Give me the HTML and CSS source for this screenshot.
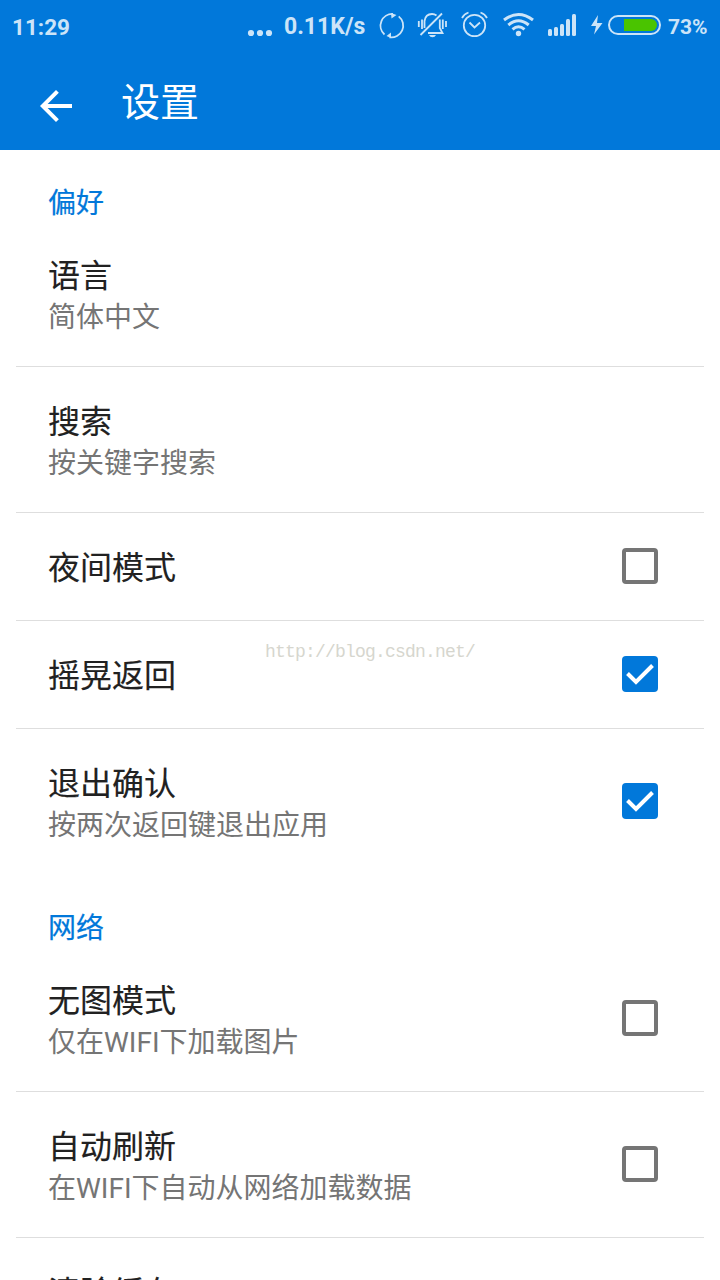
FILE: index.html
```html
<!DOCTYPE html>
<html lang="zh-CN">
<head>
    <meta charset="UTF-8">
    <meta name="viewport" content="width=device-width, initial-scale=1.0">
    <title>设置</title>
    <link rel="stylesheet" href="styles.css">
</head>
<body>
    <header class="header">
        <div class="status-bar">
            <span class="clock">11:29</span>
            <svg class="dots" width="26" height="50" viewBox="0 0 26 50">
                <circle cx="4" cy="33" r="3.1"/>
                <circle cx="13" cy="33" r="3.1"/>
                <circle cx="22" cy="33" r="3.1"/>
            </svg>
            <span class="speed">0.11K/s</span>
            <!-- sync, muted, alarm, wifi, signal, charging -->
            <svg class="icons" width="232" height="50" viewBox="376 0 232 50">
                <g class="line">
                    <path d="M384.5 34.5A11.8 11.8 0 0 1 393 13.9"/>
                    <path d="M398.7 16.4A11.8 11.8 0 0 1 389.5 37.3"/>
                    <path d="M424.500 28V21Q425.500 14 432 14Q434.500 14 436.500 15.500M439.800 19.500V28L442.500 33H428"/>
                    <path d="M420.500 35L442 13.500"/>
                    <path d="M418.800 21V27M422 19.500V29M442.800 19.500V29M446 21V27"/>
                    <circle cx="474.500" cy="25.500" r="10.700"/>
                    <path d="M469.500 22.500L474.500 27.500L480 22.500"/>
                    <path d="M462 18Q464 14 468.500 12.500M480.500 12.500Q485 14 487 18"/>
                </g>
                <g class="fill">
                    <path d="M391 13L396.500 15L391.500 18.500z"/>
                    <path d="M391 38L386.500 36L391 32.500z"/>
                    <path d="M429 35H436Q435 37.200 432.500 37.200Q430 37.200 429 35z"/>
                    <circle cx="518.500" cy="33.500" r="2.700"/>
                    <rect x="548" y="29" width="4" height="7" rx="1.500"/>
                    <rect x="554" y="27" width="4" height="9" rx="1.500"/>
                    <rect x="560" y="24" width="4" height="12" rx="1.500"/>
                    <rect x="566" y="19" width="4" height="17" rx="1.500"/>
                    <rect x="572" y="14" width="4" height="22" rx="1.500"/>
                    <path d="M598 15L591 26H596L594 34.500L602.500 23H597z"/>
                </g>
                <g class="wifi">
                    <path d="M504 20Q518.500 9 533 20"/>
                    <path d="M508.300 25Q518.500 16.500 528.700 25"/>
                    <path d="M512.500 29.300Q518.500 24.300 524.500 29.300"/>
                </g>
            </svg>
            <div class="battery"><div class="battery-level"></div></div>
            <span class="percent">73%</span>
        </div>
        <div class="toolbar">
            <svg class="back" width="48" height="48" viewBox="0 0 24 24">
                <path d="M20 11H7.830l5.590-5.590L12 4l-8 8 8 8 1.410-1.410L7.830 13H20v-2z"/>
            </svg>
            <h1>设置</h1>
        </div>
    </header>

    <main class="settings">
        <section class="group">
            <h2>偏好</h2>
            <div class="row">
                <div class="text">
                    <div class="title">语言</div>
                    <div class="summary">简体中文</div>
                </div>
            </div>
            <div class="row">
                <div class="text">
                    <div class="title">搜索</div>
                    <div class="summary">按关键字搜索</div>
                </div>
            </div>
            <div class="row single">
                <div class="text">
                    <div class="title">夜间模式</div>
                </div>
                <span class="checkbox"></span>
            </div>
            <div class="row single">
                <div class="text">
                    <div class="title">摇晃返回</div>
                </div>
                <span class="checkbox checked"><svg width="36" height="36" viewBox="0 0 36 36"><path d="M5.500 17.500L14 26L30.500 9.500"/></svg></span>
            </div>
            <div class="row">
                <div class="text">
                    <div class="title">退出确认</div>
                    <div class="summary">按两次返回键退出应用</div>
                </div>
                <span class="checkbox checked"><svg width="36" height="36" viewBox="0 0 36 36"><path d="M5.500 17.500L14 26L30.500 9.500"/></svg></span>
            </div>
        </section>

        <section class="group">
            <h2>网络</h2>
            <div class="row">
                <div class="text">
                    <div class="title">无图模式</div>
                    <div class="summary">仅在WIFI下加载图片</div>
                </div>
                <span class="checkbox"></span>
            </div>
            <div class="row">
                <div class="text">
                    <div class="title">自动刷新</div>
                    <div class="summary">在WIFI下自动从网络加载数据</div>
                </div>
                <span class="checkbox"></span>
            </div>
            <div class="row">
                <div class="text">
                    <div class="title">清除缓存</div>
                </div>
            </div>
        </section>
    </main>

    <div class="watermark">http://blog.csdn.net/</div>
</body>
</html>
```
FILE: styles.css
```css
* {
    box-sizing: border-box;
}
body {
    position: relative;
    margin: 0;
    height: 1280px;
    overflow: hidden;
    background: #fff;
    font-family: Roboto, "Noto Sans CJK SC", sans-serif;
}
.header {
    height: 150px;
    background: #0178da;
    color: #fff;
}
.status-bar {
    display: flex;
    align-items: center;
    height: 50px;
    padding: 0 12px;
    color: #cce4f8;
    font-size: 23px;
    font-weight: 700;
    line-height: 50px;
    white-space: nowrap;
}
.status-bar span {
    padding-top: 3px;
}
.status-bar svg {
    flex: none;
}
.status-bar .clock {
    flex: none;
    width: 235px;
    font-size: 22.5px;
}
.dots {
    fill: #cce4f8;
}
.status-bar .speed {
    flex: none;
    width: 92px;
    margin-left: 11px;
}
.line, .wifi {
    fill: none;
    stroke: #cce4f8;
    stroke-width: 1.8;
}
.wifi {
    stroke-width: 3;
}
.fill {
    fill: #cce4f8;
}
.battery {
    flex: none;
    width: 53px;
    height: 20px;
    padding: 2px;
    border: 2px solid #cce4f8;
    border-radius: 10px;
}
.battery-level {
    width: 33px;
    height: 12px;
    margin-left: auto;
    background: #4ac400;
    border-radius: 0 6px 6px 0;
}
.status-bar .percent {
    margin-left: 7px;
    font-size: 21px;
}
.toolbar {
    display: flex;
    align-items: center;
    height: 100px;
    padding: 12px 32px 0;
}
.back {
    fill: #fff;
}
.toolbar h1 {
    margin: -7px 0 0 41px;
    font-size: 39px;
    font-weight: 400;
    line-height: 60px;
}
.group h2 {
    height: 71px;
    margin: 0;
    padding: 34px 48px 0;
    color: #0178da;
    font-size: 28px;
    font-weight: 400;
    line-height: 40px;
    -webkit-text-stroke: 0.2px;
}
.row {
    display: flex;
    align-items: center;
    justify-content: space-between;
    height: 146px;
    margin: 0 16px;
    padding: 0 46px 0 32px;
    border-bottom: 1px solid #dedede;
}
.row:last-child {
    border-bottom-color: transparent;
}
.row.single {
    height: 108px;
}
.text {
    align-self: flex-start;
    padding-top: 35px;
}
.title {
    color: #212121;
    font-size: 32px;
    line-height: 40px;
    -webkit-text-stroke: 0.15px;
}
.summary {
    color: #757575;
    font-size: 28px;
    line-height: 44px;
}
.checkbox {
    width: 36px;
    height: 36px;
    margin-bottom: 2px;
    border: 4px solid #757575;
    border-radius: 4px;
}
.checkbox.checked {
    border: 0;
    background: #0178da;
}
.checkbox svg {
    display: block;
    fill: none;
    stroke: #fff;
    stroke-width: 4;
}
.watermark {
    position: absolute;
    top: 641px;
    left: 265px;
    color: #d6d6ce;
    font-family: "Liberation Mono", monospace;
    font-size: 18px;
    letter-spacing: -0.8px;
    line-height: 22px;
}
```
